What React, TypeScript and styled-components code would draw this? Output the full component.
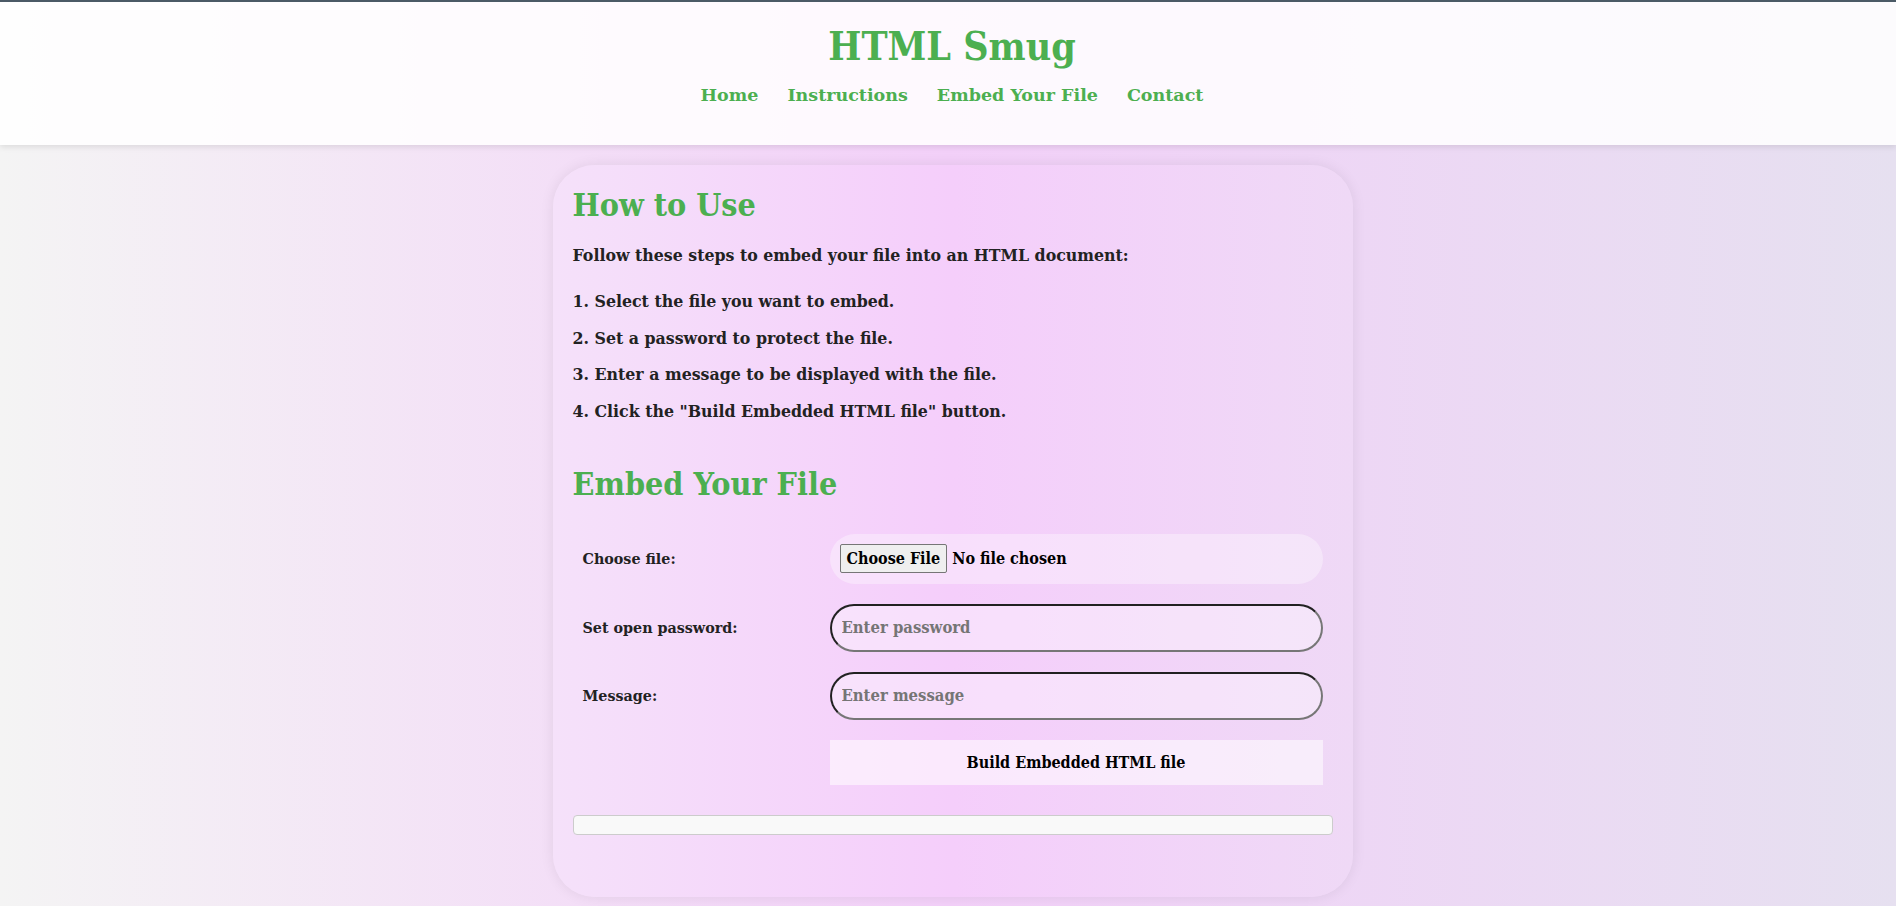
import React from "react";
import styled, { createGlobalStyle } from "styled-components";

const FONT = `"DejaVu Serif", serif`;
const FONT_CONDENSED = `"DejaVu Serif Condensed", "DejaVu Serif", serif`;

const GlobalStyle = createGlobalStyle`
  html, body {
    margin: 0;
    padding: 0;
  }
  body {
    min-height: 100vh;
    background: linear-gradient(to right, #f4f4f4 0%, #f3d0f9 50%, #e6e0f0 100%);
    font-family: ${FONT};
    font-weight: bold;
    color: #222;
  }
`;

const Header = styled.header`
  border-top: 2px solid #4b5a66;
  background: rgba(255, 255, 255, 0.86);
  box-shadow: 0 2px 6px rgba(0, 0, 0, 0.1);
  padding: 20px 0 38px 8px;
  text-align: center;
`;

const Title = styled.h1`
  margin: 0;
  font-family: ${FONT_CONDENSED};
  font-stretch: condensed;
  font-size: 39px;
  line-height: 48px;
  color: #4caf50;
`;

const Nav = styled.nav`
  margin-top: 13px;
  display: flex;
  justify-content: center;
  gap: 29px;
`;

const NavLink = styled.a`
  font-size: 17.5px;
  line-height: 24px;
  color: #4caf50;
  text-decoration: none;
`;

const Main = styled.main`
  padding: 20px 0 0 9px;
`;

const Card = styled.section`
  width: 800px;
  box-sizing: border-box;
  margin: 0 auto;
  padding: 20px;
  border-radius: 42px;
  background: linear-gradient(to right, #f5e1fa 0%, #f5cefb 50%, #efd9f6 100%);
  box-shadow: 0 0 14px rgba(0, 0, 0, 0.08);
`;

const Heading = styled.h2<{ $gap?: number }>`
  margin: ${(p) => p.$gap ?? 0}px 0 0;
  font-family: ${FONT_CONDENSED};
  font-stretch: condensed;
  font-size: 32px;
  line-height: 40px;
  color: #4caf50;
`;

const Intro = styled.p`
  margin: 21px 0 0;
  font-size: 15.8px;
  line-height: 20px;
`;

const Steps = styled.div`
  margin-top: 26px;
  display: flex;
  flex-direction: column;
  gap: 16.67px;
`;

const Step = styled.p`
  margin: 0;
  font-size: 15.8px;
  line-height: 20px;
`;

const FormGrid = styled.form`
  margin-top: 20px;
  display: grid;
  grid-template-columns: 247px 1fr;
`;

const Cell = styled.div`
  padding: 10px;
  display: flex;
  align-items: center;
`;

const Label = styled.label`
  font-size: 14.3px;
  color: #222;
`;

const FileInput = styled.input`
  width: 100%;
  height: 50px;
  box-sizing: border-box;
  padding: 10px;
  border: none;
  border-radius: 25px;
  background: rgba(255, 255, 255, 0.35);
  font-family: ${FONT_CONDENSED};
  font-stretch: condensed;
  font-weight: bold;
  font-size: 16px;
  color: #000;

  &::file-selector-button {
    font: inherit;
    font-stretch: condensed;
    color: #000;
    background: #efefef;
    border: 1px solid #767676;
    border-radius: 2px;
    padding: 4px 6px;
    margin-right: 5px;
  }
`;

const TextInput = styled.input`
  width: 100%;
  height: 48px;
  box-sizing: border-box;
  padding: 0 10px;
  border: 2px inset #767676;
  border-radius: 25px;
  background: rgba(255, 255, 255, 0.35);
  font-family: ${FONT_CONDENSED};
  font-stretch: condensed;
  font-weight: bold;
  font-size: 16.5px;
  color: #000;
  outline: none;

  &::placeholder {
    color: #757575;
  }
`;

const BuildButton = styled.button`
  width: 100%;
  height: 45px;
  border: none;
  border-radius: 0;
  background: rgba(255, 255, 255, 0.55);
  font-family: ${FONT_CONDENSED};
  font-stretch: condensed;
  font-weight: bold;
  font-size: 16px;
  color: #000;
  cursor: pointer;
`;

const Progress = styled.div`
  margin: 20px 0 42px;
  height: 20px;
  box-sizing: border-box;
  border: 1px solid #cccccc;
  border-radius: 4px;
  background: #f9f9f9;
`;

const steps = [
  "1. Select the file you want to embed.",
  "2. Set a password to protect the file.",
  "3. Enter a message to be displayed with the file.",
  '4. Click the "Build Embedded HTML file" button.',
];

export default function App() {
  return (
    <>
      <GlobalStyle />
      <Header>
        <Title>HTML Smug</Title>
        <Nav>
          <NavLink href="#home">Home</NavLink>
          <NavLink href="#instructions">Instructions</NavLink>
          <NavLink href="#embed">Embed Your File</NavLink>
          <NavLink href="#contact">Contact</NavLink>
        </Nav>
      </Header>
      <Main>
        <Card>
          <Heading id="instructions">How to Use</Heading>
          <Intro>Follow these steps to embed your file into an HTML document:</Intro>
          <Steps>
            {steps.map((s) => (
              <Step key={s}>{s}</Step>
            ))}
          </Steps>
          <Heading id="embed" $gap={42}>Embed Your File</Heading>
          <FormGrid onSubmit={(e) => e.preventDefault()}>
            <Cell>
              <Label htmlFor="file">Choose file:</Label>
            </Cell>
            <Cell>
              <FileInput id="file" type="file" />
            </Cell>
            <Cell>
              <Label htmlFor="password">Set open password:</Label>
            </Cell>
            <Cell>
              <TextInput id="password" type="password" placeholder="Enter password" />
            </Cell>
            <Cell>
              <Label htmlFor="message">Message:</Label>
            </Cell>
            <Cell>
              <TextInput id="message" type="text" placeholder="Enter message" />
            </Cell>
            <Cell />
            <Cell>
              <BuildButton type="submit">Build Embedded HTML file</BuildButton>
            </Cell>
          </FormGrid>
          <Progress />
        </Card>
      </Main>
    </>
  );
}
